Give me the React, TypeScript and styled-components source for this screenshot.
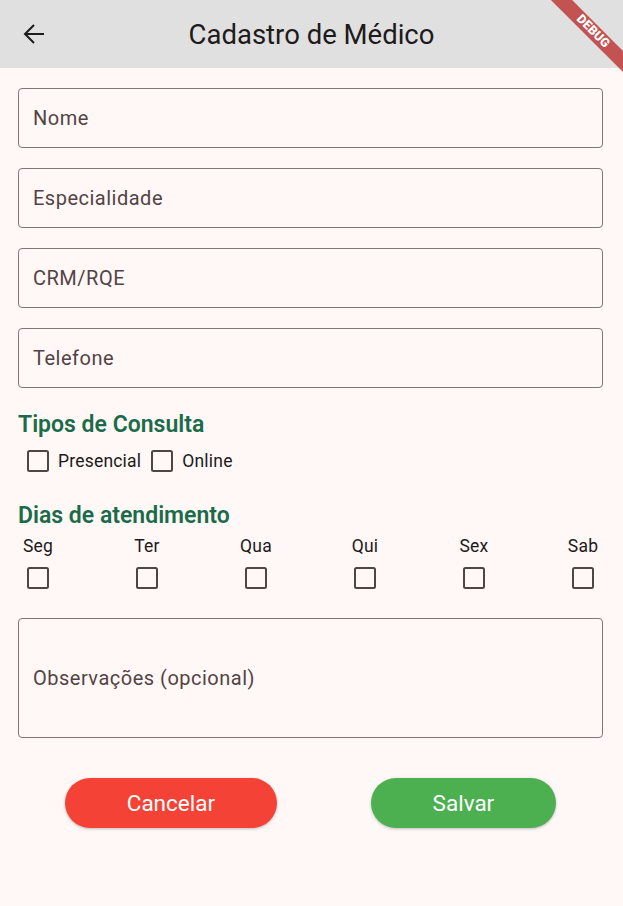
import React from "react";
import styled, { createGlobalStyle } from "styled-components";

const Global = createGlobalStyle`
  html, body { margin: 0; padding: 0; background: #fff8f6; }
  body { font-family: Roboto, "Noto Sans", sans-serif; }
  * { box-sizing: border-box; }
`;

const Page = styled.div`
  width: 623px;
  height: 906px;
  background: #fff8f6;
  position: relative;
  overflow: hidden;
  display: flex;
  flex-direction: column;
`;

const AppBar = styled.header`
  height: 68px;
  background: #e0e0e0;
  display: flex;
  align-items: center;
  padding: 0 0 0 10px;
  flex-shrink: 0;
`;

const BackButton = styled.button`
  width: 48px;
  height: 48px;
  border: none;
  background: transparent;
  display: flex;
  align-items: center;
  justify-content: center;
  padding: 0;
  color: #1d1b1c;
`;

const Title = styled.h1`
  flex: 1;
  margin: 0 58px 0 0;
  text-align: center;
  font-size: 27.5px;
  font-weight: 400;
  color: #201a1b;
  letter-spacing: 0;
`;

const Banner = styled.div`
  position: absolute;
  top: 24px;
  right: -30px;
  width: 120px;
  height: 15px;
  background: rgba(183, 28, 28, 0.72);
  transform: rotate(45deg);
  color: #fff;
  font-size: 12.5px;
  font-weight: 900;
  display: flex;
  align-items: center;
  justify-content: center;
  letter-spacing: 0.2px;
  line-height: 1;
`;

const Body = styled.main`
  padding: 20px 20px 0 18px;
  display: flex;
  flex-direction: column;
`;

const Field = styled.div<{ $tall?: boolean }>`
  height: ${(p) => (p.$tall ? "120px" : "60px")};
  border: 1px solid #857375;
  border-radius: 4px;
  display: flex;
  align-items: center;
  padding: 0 14px;
  font-size: 20px;
  letter-spacing: 0.5px;
  color: #534345;
  margin-bottom: 20px;
`;

const Heading = styled.h2<{ $top: number }>`
  margin: ${(p) => p.$top}px 0 0 0;
  font-size: 23px;
  line-height: 28px;
  font-weight: 600;
  color: #1b6b4b;
`;

const TypeRow = styled.div`
  display: flex;
  align-items: center;
  height: 40px;
  margin-top: 2px;
`;

const BoxWrap = styled.span`
  width: 40px;
  height: 40px;
  display: flex;
  align-items: center;
  justify-content: center;
  flex-shrink: 0;
`;

const Box = styled.span`
  width: 22px;
  height: 22px;
  border: 2.5px solid #4f4446;
  border-radius: 2.5px;
`;

const CheckLabel = styled.span`
  font-size: 17.5px;
  letter-spacing: 0.2px;
  color: #201a1b;
  margin-right: 1px;
`;

const DaysRow = styled.div`
  display: flex;
  justify-content: space-between;
  margin-top: 6px;
`;

const Day = styled.div`
  width: 40px;
  display: flex;
  flex-direction: column;
  align-items: center;
`;

const DayLabel = styled.span`
  font-size: 17.5px;
  line-height: 20px;
  letter-spacing: 0.2px;
  color: #201a1b;
  white-space: nowrap;
  margin-bottom: 2px;
`;

const ObsWrap = styled.div`
  margin-top: 20px;
`;

const Buttons = styled.div`
  display: flex;
  justify-content: space-around;
  margin-top: 20px;
`;

const Btn = styled.button<{ $bg: string; $pad: number }>`
  height: 50px;
  border-radius: 25px;
  border: none;
  background: ${(p) => p.$bg};
  color: #fff;
  font-family: Roboto, sans-serif;
  font-size: 22.5px;
  padding: 0 ${(p) => p.$pad}px;
  box-shadow: 0 1px 3px rgba(0, 0, 0, 0.25);
`;

const Check = () => (
  <BoxWrap>
    <Box />
  </BoxWrap>
);

const days = ["Seg", "Ter", "Qua", "Qui", "Sex", "Sab"];

export default function App() {
  return (
    <Page>
      <Global />
      <AppBar>
        <BackButton>
          <svg width="24" height="24" viewBox="0 0 24 24" fill="none" stroke="currentColor" strokeWidth="2">
            <path d="M22 12H3M12 3l-9 9 9 9" />
          </svg>
        </BackButton>
        <Title>Cadastro de Médico</Title>
      </AppBar>
      <Banner>DEBUG</Banner>
      <Body>
        <Field>Nome</Field>
        <Field>Especialidade</Field>
        <Field>CRM/RQE</Field>
        <Field>Telefone</Field>
        <Heading $top={3}>Tipos de Consulta</Heading>
        <TypeRow>
          <Check />
          <CheckLabel>Presencial</CheckLabel>
          <Check />
          <CheckLabel>Online</CheckLabel>
        </TypeRow>
        <Heading $top={21}>Dias de atendimento</Heading>
        <DaysRow>
          {days.map((d) => (
            <Day key={d}>
              <DayLabel>{d}</DayLabel>
              <Check />
            </Day>
          ))}
        </DaysRow>
        <ObsWrap>
          <Field $tall>Observações (opcional)</Field>
        </ObsWrap>
        <Buttons>
          <Btn $bg="#f44336" $pad={62}>Cancelar</Btn>
          <Btn $bg="#4caf50" $pad={62}>Salvar</Btn>
        </Buttons>
      </Body>
    </Page>
  );
}
